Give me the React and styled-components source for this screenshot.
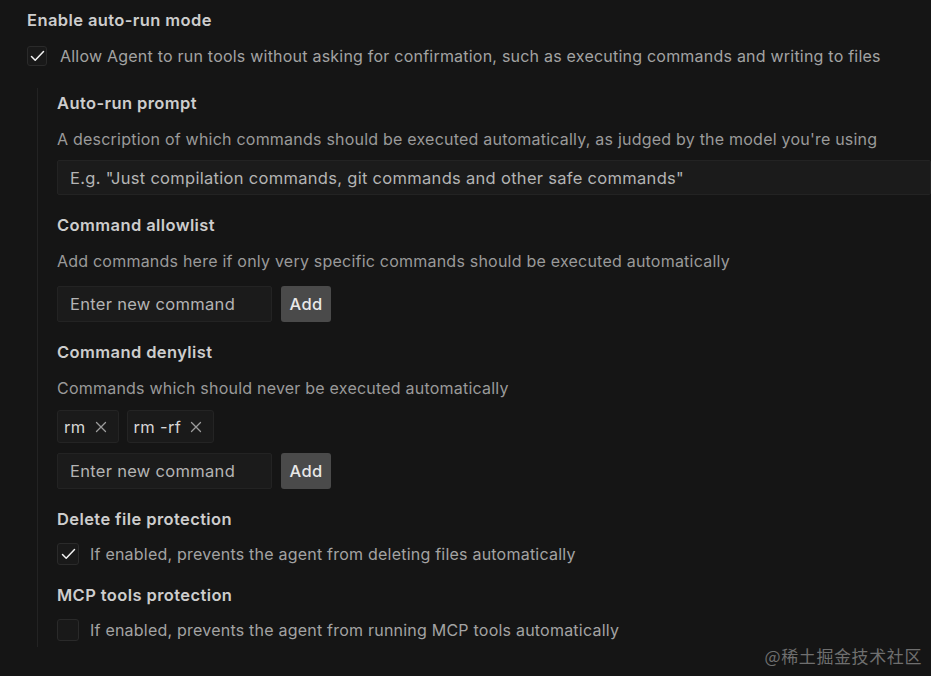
import React from 'react'
import styled, {createGlobalStyle} from 'styled-components'

const GlobalStyle = createGlobalStyle`
    html, body {
        margin: 0;
        padding: 0;
        background: #151515;
    }
    body {
        font-family: Inter, "Noto Sans", sans-serif;
        -webkit-font-smoothing: antialiased;
    }
`

const Page = styled.div`
    position: relative;
    width: 931px;
    height: 676px;
    overflow: hidden;
    box-sizing: border-box;
    padding: 9px 0 0 27px;
    background: #151515;
`

const Title = styled.div`
    font-size: 16.5px;
    line-height: 22px;
    font-weight: 600;
    letter-spacing: 0.4px;
    color: #cdcdcd;
    white-space: nowrap;
`

const Desc = styled.div`
    margin-top: 14px;
    font-size: 16px;
    line-height: 22px;
    letter-spacing: 0.22px;
    color: #9a9a9a;
    white-space: nowrap;
`

const CheckRow = styled.label`
    display: flex;
    align-items: center;
    gap: ${props => props.$gap || 12}px;
    margin-top: ${props => props.$top || 13}px;
    font-size: 16px;
    letter-spacing: 0.22px;
    color: #a3a3a3;
    white-space: nowrap;
`

const Box = styled.span`
    display: flex;
    align-items: center;
    justify-content: center;
    flex: none;
    width: ${props => props.$size}px;
    height: ${props => props.$size}px;
    box-sizing: border-box;
    border: 1px solid #2a2a2a;
    border-radius: 3px;
    background: #191919;
`

const Nested = styled.div`
    margin: 22px 0 0 10px;
    padding: 4px 0 6px 19px;
    border-left: 1px solid #232323;
`

const Group = styled.div`
    & + & {
        margin-top: 19px;
    }
`

const Row = styled.div`
    display: flex;
    align-items: center;
    gap: ${props => props.$gap || 9}px;
    margin-top: ${props => props.$top || 14}px;
`

const Input = styled.div`
    display: flex;
    align-items: center;
    box-sizing: border-box;
    width: ${props => props.$width};
    height: ${props => props.$height || 36}px;
    padding: 0 12px;
    background: #1b1b1b;
    border: 1px solid #232323;
    border-radius: 2px;
    font-size: 16.5px;
    letter-spacing: 0.3px;
    color: #b4b4b4;
    white-space: nowrap;
`

const AddButton = styled.button`
    height: 36px;
    width: 50px;
    padding: 0;
    border: none;
    border-radius: 3px;
    background: #4a4a4a;
    color: #e8e8e8;
    font-family: Inter, sans-serif;
    font-size: 16.5px;
    font-weight: 500;
    letter-spacing: 0.3px;
`

const Tag = styled.div`
    display: flex;
    align-items: center;
    gap: 9px;
    height: 33px;
    box-sizing: border-box;
    padding: 0 11px 0 6px;
    background: #1a1a1a;
    border: 1px solid #242424;
    border-radius: 3px;
    font-size: 16.5px;
    letter-spacing: 0.3px;
    color: #d6d6d6;
`

const Watermark = styled.div`
    position: absolute;
    right: 9px;
    bottom: 8px;
    font-family: "Noto Sans CJK SC", sans-serif;
    font-size: 17px;
    color: #6f6f6f;
    letter-spacing: 0.6px;
`

const Check = ({size = 20, checked}) => (
    <Box $size={size}>
        {checked && (
            <svg width="15" height="12" viewBox="0 0 15 12" fill="none">
                <path d="M1.5 6.5 L5.2 10.2 L13.5 1.5" stroke="#f2f2f2" strokeWidth="1.5" strokeLinecap="round" strokeLinejoin="round"/>
            </svg>
        )}
    </Box>
)

const Close = () => (
    <svg width="12" height="12" viewBox="0 0 12 12" fill="none">
        <path d="M1.5 1.5 L10.5 10.5 M10.5 1.5 L1.5 10.5" stroke="#9c9c9c" strokeWidth="1.3" strokeLinecap="round"/>
    </svg>
)

const CommandInput = ({top}) => (
    <Row $top={top}>
        <Input $width="215px">Enter new command</Input>
        <AddButton>Add</AddButton>
    </Row>
)

export default function App() {
    return (
        <Page>
            <GlobalStyle/>
            <Title>Enable auto-run mode</Title>
            <CheckRow $top={15} $gap={13}>
                <Check size={20} checked/>
                Allow Agent to run tools without asking for confirmation, such as executing commands and writing to files
            </CheckRow>
            <Nested>
                <Group>
                    <Title>Auto-run prompt</Title>
                    <Desc>A description of which commands should be executed automatically, as judged by the model you're using</Desc>
                    <Row $top={10}>
                        <Input $width="900px" $height={35}>E.g. "Just compilation commands, git commands and other safe commands"</Input>
                    </Row>
                </Group>
                <Group>
                    <Title>Command allowlist</Title>
                    <Desc>Add commands here if only very specific commands should be executed automatically</Desc>
                    <CommandInput top={14}/>
                </Group>
                <Group>
                    <Title>Command denylist</Title>
                    <Desc>Commands which should never be executed automatically</Desc>
                    <Row $top={11} $gap={8}>
                        <Tag>rm <Close/></Tag>
                        <Tag>rm -rf <Close/></Tag>
                    </Row>
                    <CommandInput top={10}/>
                </Group>
                <Group>
                    <Title>Delete file protection</Title>
                    <CheckRow $gap={11}>
                        <Check size={22} checked/>
                        If enabled, prevents the agent from deleting files automatically
                    </CheckRow>
                </Group>
                <Group>
                    <Title>MCP tools protection</Title>
                    <CheckRow $gap={11}>
                        <Check size={22}/>
                        If enabled, prevents the agent from running MCP tools automatically
                    </CheckRow>
                </Group>
            </Nested>
            <Watermark>@稀土掘金技术社区</Watermark>
        </Page>
    )
}
